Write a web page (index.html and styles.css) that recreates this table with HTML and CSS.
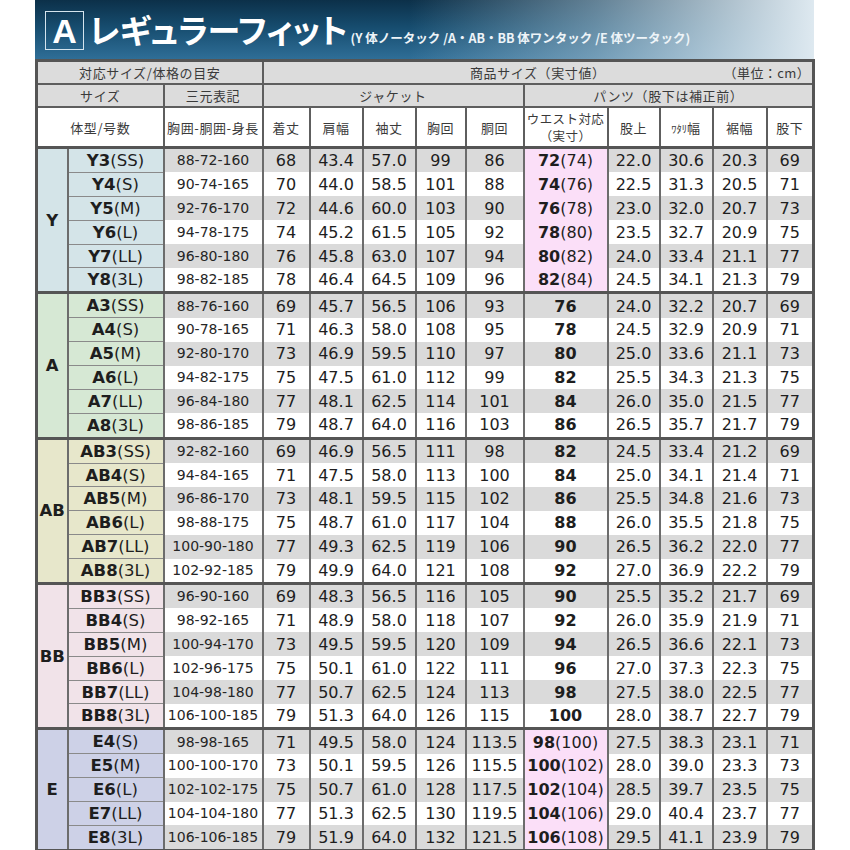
FILE: index.html
```html
<!DOCTYPE html>
<html lang="ja">
<head>
<meta charset="utf-8">
<title>レギュラーフィット サイズ表</title>
<link rel="stylesheet" href="styles.css">
</head>
<body>
<div class="page">
  <div class="banner">
    <span class="badge">A</span>
    <span class="title">レギュラーフィット</span>
    <span class="sub">(Y 体ノータック /A・AB・BB 体ワンタック /E 体ツータック)</span>
  </div>
  <table class="chart">
    <colgroup>
      <col class="c-grp"><col class="c-size"><col class="c-3d">
      <col class="c-kitake"><col class="c-kata"><col class="c-sode"><col class="c-mune"><col class="c-do">
      <col class="c-waist"><col class="c-mata"><col class="c-watari"><col class="c-suso"><col class="c-matashita">
    </colgroup>
    <thead>
      <tr class="h1">
        <th colspan="3">対応サイズ/体格の目安</th>
        <th colspan="10"><div class="h1-inner"><span></span><span class="h1-title">商品サイズ（実寸値）</span><span class="unit">（単位：cm）</span></div></th>
      </tr>
      <tr class="h2">
        <th colspan="2">サイズ</th>
        <th>三元表記</th>
        <th colspan="5">ジャケット</th>
        <th colspan="5">パンツ（股下は補正前）</th>
      </tr>
      <tr class="h3">
        <th colspan="2">体型/号数</th>
        <th>胸囲-胴囲-身長</th>
        <th>着丈</th><th>肩幅</th><th>袖丈</th><th>胸回</th><th>胴回</th>
        <th class="two"><span class="ln">ウエスト対応</span><span class="ln">（実寸）</span></th>
        <th>股上</th><th><span class="hk">ﾜﾀﾘ</span>幅</th><th>裾幅</th><th>股下</th>
      </tr>
    </thead>
    <tbody>
      <tr class="g first">
        <td class="grp y" rowspan="6">Y</td>
        <td class="sz y"><b>Y3</b>(SS)</td><td class="td3">88-72-160</td>
        <td>68</td><td>43.4</td><td>57.0</td><td>99</td><td>86</td>
        <td class="pk"><b>72</b>(74)</td><td>22.0</td><td>30.6</td><td>20.3</td><td>69</td>
      </tr>
      <tr>
        <td class="sz y"><b>Y4</b>(S)</td><td class="td3">90-74-165</td>
        <td>70</td><td>44.0</td><td>58.5</td><td>101</td><td>88</td>
        <td class="pk"><b>74</b>(76)</td><td>22.5</td><td>31.3</td><td>20.5</td><td>71</td>
      </tr>
      <tr class="g">
        <td class="sz y"><b>Y5</b>(M)</td><td class="td3">92-76-170</td>
        <td>72</td><td>44.6</td><td>60.0</td><td>103</td><td>90</td>
        <td class="pk"><b>76</b>(78)</td><td>23.0</td><td>32.0</td><td>20.7</td><td>73</td>
      </tr>
      <tr>
        <td class="sz y"><b>Y6</b>(L)</td><td class="td3">94-78-175</td>
        <td>74</td><td>45.2</td><td>61.5</td><td>105</td><td>92</td>
        <td class="pk"><b>78</b>(80)</td><td>23.5</td><td>32.7</td><td>20.9</td><td>75</td>
      </tr>
      <tr class="g">
        <td class="sz y"><b>Y7</b>(LL)</td><td class="td3">96-80-180</td>
        <td>76</td><td>45.8</td><td>63.0</td><td>107</td><td>94</td>
        <td class="pk"><b>80</b>(82)</td><td>24.0</td><td>33.4</td><td>21.1</td><td>77</td>
      </tr>
      <tr>
        <td class="sz y"><b>Y8</b>(3L)</td><td class="td3">98-82-185</td>
        <td>78</td><td>46.4</td><td>64.5</td><td>109</td><td>96</td>
        <td class="pk"><b>82</b>(84)</td><td>24.5</td><td>34.1</td><td>21.3</td><td>79</td>
      </tr>

      <tr class="g first">
        <td class="grp a" rowspan="6">A</td>
        <td class="sz a"><b>A3</b>(SS)</td><td class="td3">88-76-160</td>
        <td>69</td><td>45.7</td><td>56.5</td><td>106</td><td>93</td>
        <td><b>76</b></td><td>24.0</td><td>32.2</td><td>20.7</td><td>69</td>
      </tr>
      <tr>
        <td class="sz a"><b>A4</b>(S)</td><td class="td3">90-78-165</td>
        <td>71</td><td>46.3</td><td>58.0</td><td>108</td><td>95</td>
        <td><b>78</b></td><td>24.5</td><td>32.9</td><td>20.9</td><td>71</td>
      </tr>
      <tr class="g">
        <td class="sz a"><b>A5</b>(M)</td><td class="td3">92-80-170</td>
        <td>73</td><td>46.9</td><td>59.5</td><td>110</td><td>97</td>
        <td><b>80</b></td><td>25.0</td><td>33.6</td><td>21.1</td><td>73</td>
      </tr>
      <tr>
        <td class="sz a"><b>A6</b>(L)</td><td class="td3">94-82-175</td>
        <td>75</td><td>47.5</td><td>61.0</td><td>112</td><td>99</td>
        <td><b>82</b></td><td>25.5</td><td>34.3</td><td>21.3</td><td>75</td>
      </tr>
      <tr class="g">
        <td class="sz a"><b>A7</b>(LL)</td><td class="td3">96-84-180</td>
        <td>77</td><td>48.1</td><td>62.5</td><td>114</td><td>101</td>
        <td><b>84</b></td><td>26.0</td><td>35.0</td><td>21.5</td><td>77</td>
      </tr>
      <tr>
        <td class="sz a"><b>A8</b>(3L)</td><td class="td3">98-86-185</td>
        <td>79</td><td>48.7</td><td>64.0</td><td>116</td><td>103</td>
        <td><b>86</b></td><td>26.5</td><td>35.7</td><td>21.7</td><td>79</td>
      </tr>

      <tr class="g first">
        <td class="grp ab" rowspan="6">AB</td>
        <td class="sz ab"><b>AB3</b>(SS)</td><td class="td3">92-82-160</td>
        <td>69</td><td>46.9</td><td>56.5</td><td>111</td><td>98</td>
        <td><b>82</b></td><td>24.5</td><td>33.4</td><td>21.2</td><td>69</td>
      </tr>
      <tr>
        <td class="sz ab"><b>AB4</b>(S)</td><td class="td3">94-84-165</td>
        <td>71</td><td>47.5</td><td>58.0</td><td>113</td><td>100</td>
        <td><b>84</b></td><td>25.0</td><td>34.1</td><td>21.4</td><td>71</td>
      </tr>
      <tr class="g">
        <td class="sz ab"><b>AB5</b>(M)</td><td class="td3">96-86-170</td>
        <td>73</td><td>48.1</td><td>59.5</td><td>115</td><td>102</td>
        <td><b>86</b></td><td>25.5</td><td>34.8</td><td>21.6</td><td>73</td>
      </tr>
      <tr>
        <td class="sz ab"><b>AB6</b>(L)</td><td class="td3">98-88-175</td>
        <td>75</td><td>48.7</td><td>61.0</td><td>117</td><td>104</td>
        <td><b>88</b></td><td>26.0</td><td>35.5</td><td>21.8</td><td>75</td>
      </tr>
      <tr class="g">
        <td class="sz ab"><b>AB7</b>(LL)</td><td class="td3">100-90-180</td>
        <td>77</td><td>49.3</td><td>62.5</td><td>119</td><td>106</td>
        <td><b>90</b></td><td>26.5</td><td>36.2</td><td>22.0</td><td>77</td>
      </tr>
      <tr>
        <td class="sz ab"><b>AB8</b>(3L)</td><td class="td3">102-92-185</td>
        <td>79</td><td>49.9</td><td>64.0</td><td>121</td><td>108</td>
        <td><b>92</b></td><td>27.0</td><td>36.9</td><td>22.2</td><td>79</td>
      </tr>

      <tr class="g first">
        <td class="grp bb" rowspan="6">BB</td>
        <td class="sz bb"><b>BB3</b>(SS)</td><td class="td3">96-90-160</td>
        <td>69</td><td>48.3</td><td>56.5</td><td>116</td><td>105</td>
        <td><b>90</b></td><td>25.5</td><td>35.2</td><td>21.7</td><td>69</td>
      </tr>
      <tr>
        <td class="sz bb"><b>BB4</b>(S)</td><td class="td3">98-92-165</td>
        <td>71</td><td>48.9</td><td>58.0</td><td>118</td><td>107</td>
        <td><b>92</b></td><td>26.0</td><td>35.9</td><td>21.9</td><td>71</td>
      </tr>
      <tr class="g">
        <td class="sz bb"><b>BB5</b>(M)</td><td class="td3">100-94-170</td>
        <td>73</td><td>49.5</td><td>59.5</td><td>120</td><td>109</td>
        <td><b>94</b></td><td>26.5</td><td>36.6</td><td>22.1</td><td>73</td>
      </tr>
      <tr>
        <td class="sz bb"><b>BB6</b>(L)</td><td class="td3">102-96-175</td>
        <td>75</td><td>50.1</td><td>61.0</td><td>122</td><td>111</td>
        <td><b>96</b></td><td>27.0</td><td>37.3</td><td>22.3</td><td>75</td>
      </tr>
      <tr class="g">
        <td class="sz bb"><b>BB7</b>(LL)</td><td class="td3">104-98-180</td>
        <td>77</td><td>50.7</td><td>62.5</td><td>124</td><td>113</td>
        <td><b>98</b></td><td>27.5</td><td>38.0</td><td>22.5</td><td>77</td>
      </tr>
      <tr>
        <td class="sz bb"><b>BB8</b>(3L)</td><td class="td3">106-100-185</td>
        <td>79</td><td>51.3</td><td>64.0</td><td>126</td><td>115</td>
        <td><b>100</b></td><td>28.0</td><td>38.7</td><td>22.7</td><td>79</td>
      </tr>

      <tr class="g first">
        <td class="grp e" rowspan="5">E</td>
        <td class="sz e"><b>E4</b>(S)</td><td class="td3">98-98-165</td>
        <td>71</td><td>49.5</td><td>58.0</td><td>124</td><td>113.5</td>
        <td class="pk"><b>98</b>(100)</td><td>27.5</td><td>38.3</td><td>23.1</td><td>71</td>
      </tr>
      <tr>
        <td class="sz e"><b>E5</b>(M)</td><td class="td3">100-100-170</td>
        <td>73</td><td>50.1</td><td>59.5</td><td>126</td><td>115.5</td>
        <td class="pk"><b>100</b>(102)</td><td>28.0</td><td>39.0</td><td>23.3</td><td>73</td>
      </tr>
      <tr class="g">
        <td class="sz e"><b>E6</b>(L)</td><td class="td3">102-102-175</td>
        <td>75</td><td>50.7</td><td>61.0</td><td>128</td><td>117.5</td>
        <td class="pk"><b>102</b>(104)</td><td>28.5</td><td>39.7</td><td>23.5</td><td>75</td>
      </tr>
      <tr>
        <td class="sz e"><b>E7</b>(LL)</td><td class="td3">104-104-180</td>
        <td>77</td><td>51.3</td><td>62.5</td><td>130</td><td>119.5</td>
        <td class="pk"><b>104</b>(106)</td><td>29.0</td><td>40.4</td><td>23.7</td><td>77</td>
      </tr>
      <tr class="g">
        <td class="sz e"><b>E8</b>(3L)</td><td class="td3">106-106-185</td>
        <td>79</td><td>51.9</td><td>64.0</td><td>132</td><td>121.5</td>
        <td class="pk"><b>106</b>(108)</td><td>29.5</td><td>41.1</td><td>23.9</td><td>79</td>
      </tr>
    </tbody>
  </table>
</div>
</body>
</html>
```

FILE: styles.css
```css
html, body {
  margin: 0;
  padding: 0;
  background: #ffffff;
}

.page {
  margin-left: 35px;
  width: 779px;
}

/* ---------- banner ---------- */
.banner {
  height: 59px;
  display: flex;
  align-items: center;
  padding-left: 10px;
  box-sizing: border-box;
  background:
    linear-gradient(90deg, rgba(214,228,236,0) 0%, rgba(214,228,236,0) 48%, rgba(170,196,212,0.55) 72%, rgba(222,233,240,1) 100%),
    linear-gradient(180deg, #0c3049 0%, #164c6e 45%, #2f6e97 100%);
  color: #ffffff;
}

.badge {
  width: 37px;
  height: 37px;
  border: 1px solid #d4e4ee;
  display: flex;
  align-items: center;
  justify-content: center;
  font-family: "Liberation Sans", Arial, sans-serif;
  font-weight: bold;
  font-size: 34px;
  line-height: 1;
  margin-right: 5px;
  margin-top: 2px;
}

.title {
  font-family: "Noto Sans CJK JP", "Noto Sans", sans-serif;
  font-weight: 700;
  font-size: 33px;
  line-height: 1;
  font-feature-settings: "palt";
  letter-spacing: -0.2px;
}

.sub {
  font-family: "Noto Sans CJK JP", "Noto Sans", sans-serif;
  font-weight: 700;
  font-size: 12.5px;
  margin-left: 3px;
  margin-top: 16px;
  color: #eef4f8;
}

/* ---------- table ---------- */
.chart {
  width: 779px;
  table-layout: fixed;
  border-collapse: collapse;
  border: 3px solid #555555;
}

.c-grp { width: 31px; }
.c-size { width: 96px; }
.c-3d { width: 99px; }
.c-kitake { width: 47px; }
.c-kata { width: 53px; }
.c-sode { width: 53px; }
.c-mune { width: 50px; }
.c-do { width: 58px; }
.c-waist { width: 84px; }
.c-mata { width: 52px; }
.c-watari { width: 53px; }
.c-suso { width: 54px; }
.c-matashita { width: 47px; }

.chart th {
  font-family: "Noto Sans CJK JP", "Noto Sans", sans-serif;
  font-weight: 400;
  font-size: 13px;
  letter-spacing: 0.6px;
  color: #3a3a3a;
  border: 2px solid #5e5e5e;
  padding: 0;
  text-align: center;
  white-space: nowrap;
}

.h1 th, .h2 th {
  background: #dcdcdc;
  height: 21px;
  line-height: 18px;
}

.h3 th {
  background: #ffffff;
  height: 38px;
}

.h3 th.two {
  font-size: 12.5px;
  letter-spacing: 0.4px;
}

.ln {
  display: block;
  line-height: 17px;
}

.hk {
  font-size: 10.5px;
  letter-spacing: 0;
}

.h1-inner {
  display: grid;
  grid-template-columns: 1fr auto 1fr;
  align-items: center;
}

.unit {
  justify-self: end;
  padding-right: 2px;
  letter-spacing: 0.4px;
}

.chart td {
  font-family: "DejaVu Sans", "Liberation Sans", sans-serif;
  font-size: 16px;
  color: #1e1e1e;
  text-align: center;
  padding: 0;
  height: 22.9px;
  line-height: 21px;
  white-space: nowrap;
  background: #ffffff;
  border-left: 2px solid #6c6c6c;
  border-right: 2px solid #6c6c6c;
}

.chart tr.g td {
  background: #dadada;
}

.chart tr.first td {
  border-top: 3px solid #555555;
}

.chart td b {
  font-weight: bold;
}

.chart td.td3 {
  font-size: 14px;
  color: #262626;
}

.chart td.sz {
  font-size: 16.5px;
  border-bottom: 1px solid #8a8a8a;
  border-top: 1px solid #8a8a8a;
}

.chart tr.first td.sz {
  border-top: 3px solid #555555;
}

.chart td.grp {
  font-weight: bold;
  font-size: 16.5px;
}

.chart td.pk,
.chart tr.g td.pk {
  background: #fbdff8;
}

.chart td.y, .chart tr.g td.y { background: #d4e4e8; }
.chart td.a, .chart tr.g td.a { background: #d6e8d4; }
.chart td.ab, .chart tr.g td.ab { background: #e7e7cb; }
.chart td.bb, .chart tr.g td.bb { background: #f1e3e9; }
.chart td.e, .chart tr.g td.e { background: #cdd1e7; }
```
